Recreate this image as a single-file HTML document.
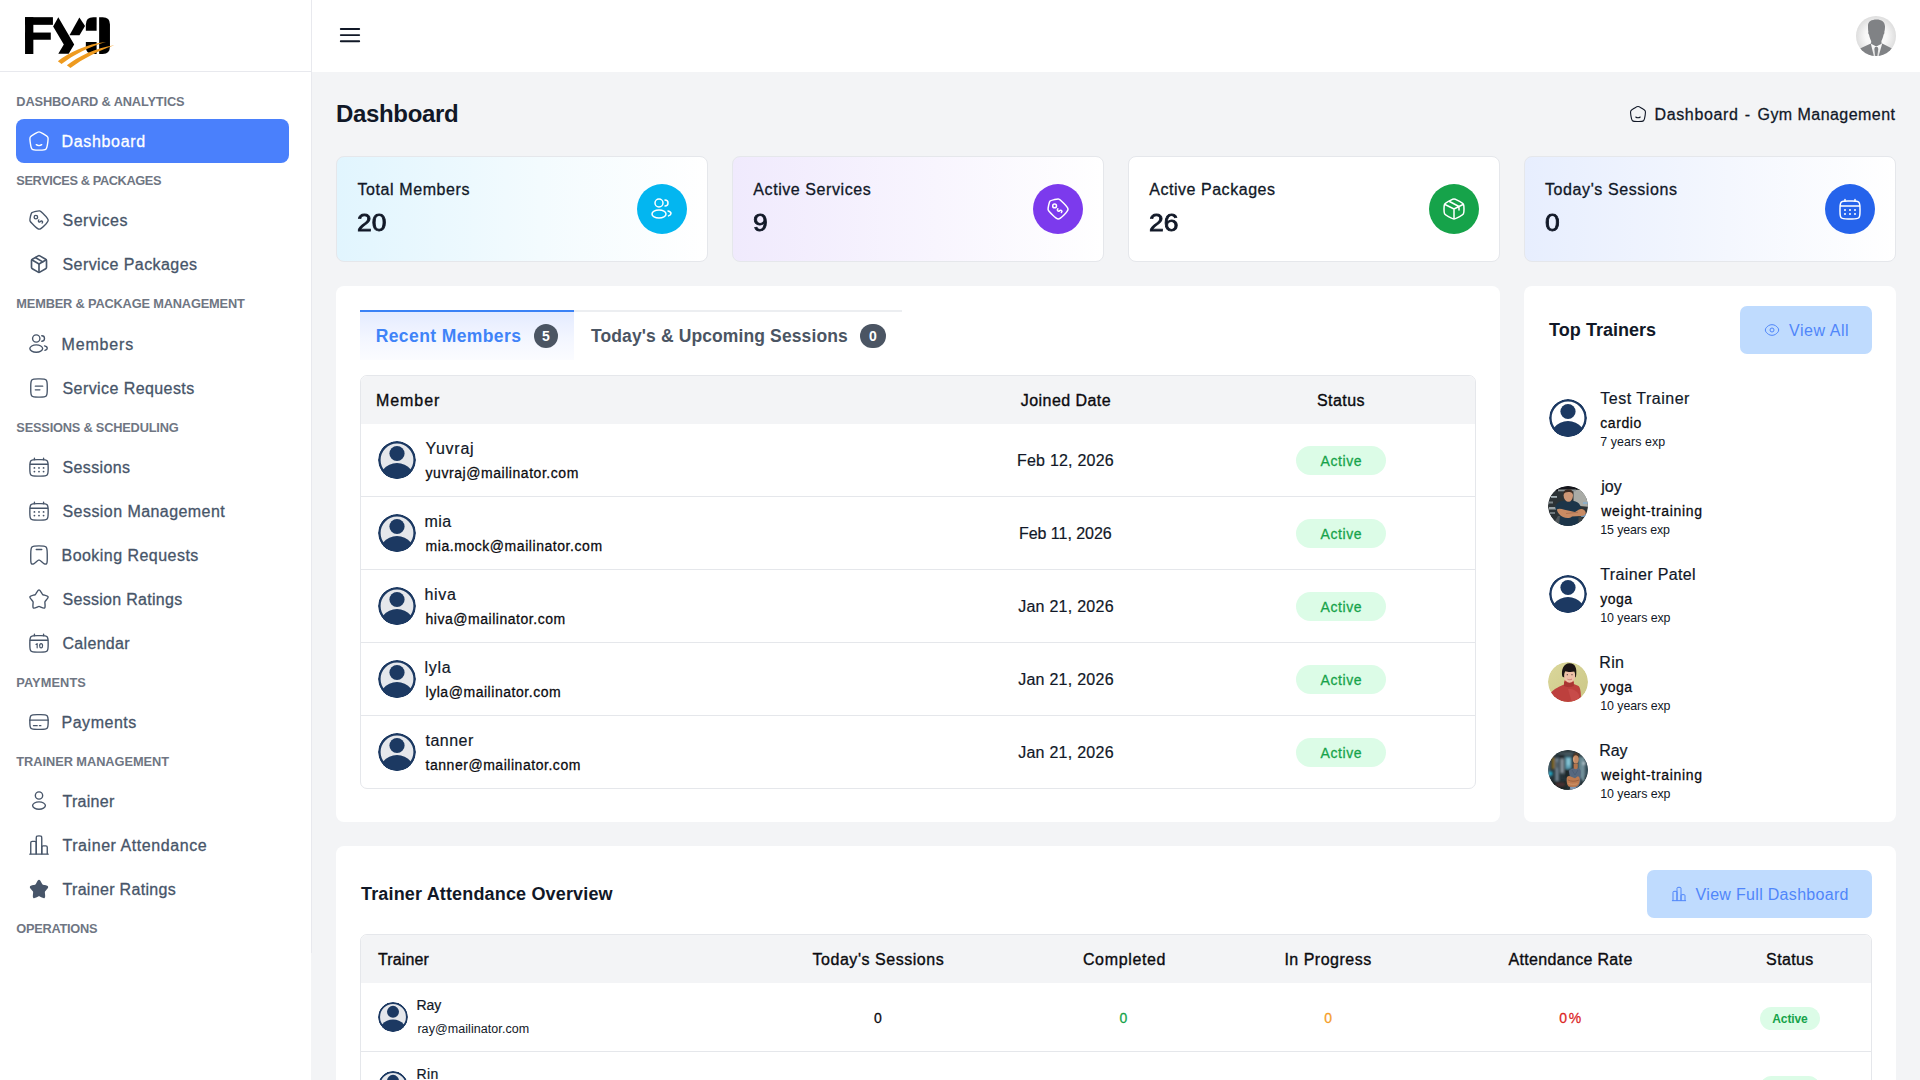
<!DOCTYPE html>
<html lang="en">
<head>
<meta charset="utf-8">
<title>Dashboard - Gym Management</title>
<style>
*{box-sizing:border-box;margin:0;padding:0}
html,body{width:1920px;height:1080px;overflow:hidden}
body{font-family:"Liberation Sans",sans-serif;background:#f3f4f6;color:#111827;position:relative;font-size:16px}
svg{display:block}
.abs{position:absolute}
.t{position:absolute;white-space:nowrap;display:block}
.md{-webkit-text-stroke:0.27px currentColor}
.sb{font-weight:bold}

/* ---------- sidebar ---------- */
#sidebar{position:absolute;left:0;top:0;width:311px;height:1080px;background:#fff}
#sideline{position:absolute;left:311px;top:0;width:1px;height:953px;background:#e8e9ee}
#logo{position:absolute;left:10px;top:5px;width:120px;height:70px}
#sidehead-line{position:absolute;left:0;top:71px;width:311px;height:1px;background:#e8e9ee}
.lbl{position:absolute;left:16px;height:35px;line-height:35px;font-size:12.800px;font-weight:bold;color:#6f7683;white-space:nowrap}
.nav{position:absolute;left:16px;width:273px;height:44px;border-radius:8px;color:#475569}
.nav .tx{position:absolute;left:46px;top:1px;line-height:44px;font-size:16px;white-space:nowrap;-webkit-text-stroke:0.3px currentColor}
.nav svg{position:absolute;left:12px;top:11px;width:22px;height:22px;fill:none;stroke:currentColor;stroke-width:1.5}
.nav.active{background:#4a80fc;color:#fff}

/* ---------- header ---------- */
#header{position:absolute;left:312px;top:0;width:1608px;height:72px;background:#fff}
#burger{position:absolute;left:339px;top:26px;width:22px;height:18px}
#useravatar{position:absolute;left:1856px;top:16px;width:40px;height:40px}

/* ---------- main ---------- */
.panel{position:absolute;background:#fff;border-radius:8px}
.card{position:absolute;top:156px;width:372px;height:106px;border:1px solid #e5e7eb;border-radius:8px;background:#fff}
.card .lab{position:absolute;left:20px;top:21px;line-height:24px;font-size:16px;white-space:nowrap;-webkit-text-stroke:0.3px currentColor}
.card .val{position:absolute;left:19.500px;top:50px;line-height:32px;font-size:23.600px;white-space:nowrap;-webkit-text-stroke:0.8px currentColor;transform:scaleX(1.12);transform-origin:0 50%}
.card .ic{position:absolute;left:300px;top:27px;width:50px;height:50px;border-radius:50%}
.card .ic svg{position:absolute;left:13px;top:13px;width:24px;height:24px;fill:none;stroke:#fff;stroke-width:1.5}

.tbl{position:absolute;border:1px solid #e5e7eb;border-radius:7px;background:#fff;overflow:hidden}
.thead{position:absolute;left:0;top:0;right:0;background:#f3f4f6}
.th{position:absolute;top:1px;font-size:16px;color:#0b0b0f;white-space:nowrap;-webkit-text-stroke:0.35px currentColor}
.row{position:absolute;left:0;right:0;border-top:1px solid #e5e7eb}
.pill{position:absolute;border-radius:999px;background:#dcfce7;color:#16a34a;text-align:center;white-space:nowrap}
.btn{position:absolute;background:#bfdbfe;border-radius:7px;color:#5086fa}
.av{position:absolute;border-radius:50%;clip-path:circle(50%)}
/*FIT*/
#l1{letter-spacing:-0.144px;left:16.30px!important}
#l2{letter-spacing:-0.399px;left:16.30px!important}
#l3{letter-spacing:-0.171px;left:16.30px!important}
#l4{letter-spacing:-0.202px;left:16.30px!important}
#l5{letter-spacing:0.079px;left:16.30px!important}
#l6{letter-spacing:-0.050px;left:16.30px!important}
#l7{letter-spacing:-0.270px;left:16.30px!important}
#n1{letter-spacing:0.665px;left:45.50px!important}
#n2{letter-spacing:0.521px;left:46.50px!important}
#n3{letter-spacing:0.428px;left:46.50px!important}
#n4{letter-spacing:0.853px;left:45.50px!important}
#n5{letter-spacing:0.420px;left:46.50px!important}
#n6{letter-spacing:0.367px;left:46.50px!important}
#n7{letter-spacing:0.440px;left:46.50px!important}
#n8{letter-spacing:0.462px;left:45.50px!important}
#n9{letter-spacing:0.291px;left:46.50px!important}
#n10{letter-spacing:0.312px;left:46.50px!important}
#n11{letter-spacing:0.522px;left:45.50px!important}
#n12{letter-spacing:0.290px;left:46.50px!important}
#n13{letter-spacing:0.558px;left:46.50px!important}
#n14{letter-spacing:0.322px;left:46.50px!important}
#ptitle{letter-spacing:-0.338px;left:336.00px!important}
#bc1{letter-spacing:0.665px;left:1654.41px!important}
#bc2{letter-spacing:0.000px;left:1744.71px!important}
#bc3{letter-spacing:0.448px;left:1757.50px!important}
#c1l{letter-spacing:0.590px;left:20.50px!important}
#c2l{letter-spacing:0.580px;left:20.30px!important}
#c3l{letter-spacing:0.537px;left:20.21px!important}
#c4l{letter-spacing:0.592px;left:20.00px!important}
#tb1{letter-spacing:0.398px;left:375.71px!important}
#tb2{letter-spacing:0.115px;left:591.00px!important}
#mh1{letter-spacing:0.927px;left:15.00px!important}
#mh2{letter-spacing:0.450px;left:704.93px!important}
#mh3{letter-spacing:0.427px;left:979.97px!important}
#mn0{letter-spacing:0.716px;left:64.50px!important}
#mn1{letter-spacing:0.457px;left:63.50px!important}
#mn2{letter-spacing:0.648px;left:63.50px!important}
#mn3{letter-spacing:0.727px;left:63.50px!important}
#mn4{letter-spacing:0.490px;left:64.50px!important}
#me0{letter-spacing:0.552px;left:64.50px!important}
#me1{letter-spacing:0.554px;left:64.50px!important}
#me2{letter-spacing:0.528px;left:64.50px!important}
#me3{letter-spacing:0.543px;left:64.50px!important}
#me4{letter-spacing:0.535px;left:64.50px!important}
#md0{letter-spacing:0.213px;left:704.46px!important}
#md1{letter-spacing:-0.042px;left:704.33px!important}
#md2{letter-spacing:0.261px;left:704.99px!important}
#md3{letter-spacing:0.261px;left:704.99px!important}
#md4{letter-spacing:0.261px;left:704.99px!important}
#mp0{letter-spacing:0.579px;margin-right:-0.579px}
#mp1{letter-spacing:0.579px;margin-right:-0.579px}
#mp2{letter-spacing:0.579px;margin-right:-0.579px}
#mp3{letter-spacing:0.579px;margin-right:-0.579px}
#mp4{letter-spacing:0.579px;margin-right:-0.579px}
#tt{letter-spacing:0.029px;left:1549.11px!important}
#va{letter-spacing:0.545px;left:49.00px!important}
#tn0{letter-spacing:0.504px;left:1600.30px!important}
#tn1{letter-spacing:0.016px;left:1601.30px!important}
#tn2{letter-spacing:0.354px;left:1600.30px!important}
#tn3{letter-spacing:0.342px;left:1599.30px!important}
#tn4{letter-spacing:-0.128px;left:1599.30px!important}
#ts0{letter-spacing:0.570px;left:1600.30px!important}
#ts1{letter-spacing:0.695px;left:1601.30px!important}
#ts2{letter-spacing:0.474px;left:1600.30px!important}
#ts3{letter-spacing:0.474px;left:1600.30px!important}
#ts4{letter-spacing:0.695px;left:1601.30px!important}
#tx0{letter-spacing:0.084px;left:1600.30px!important}
#tx1{letter-spacing:-0.115px;left:1600.30px!important}
#tx2{letter-spacing:-0.069px;left:1600.30px!important}
#tx3{letter-spacing:-0.069px;left:1600.30px!important}
#tx4{letter-spacing:-0.069px;left:1600.30px!important}
#ta{letter-spacing:0.160px;left:361.00px!important}
#vfd{letter-spacing:0.308px;left:48.61px!important}
#ah1{letter-spacing:0.123px;left:17.00px!important}
#ah2{letter-spacing:0.542px;left:517.38px!important}
#ah3{letter-spacing:0.651px;left:763.54px!important}
#ah4{letter-spacing:0.498px;left:967.05px!important}
#ah5{letter-spacing:0.335px;left:1209.53px!important}
#ah6{letter-spacing:0.367px;left:1428.89px!important}
#an0{letter-spacing:-0.050px;left:55.40px!important}
#ae0{letter-spacing:0.068px;left:56.40px!important}
#an1{letter-spacing:0.385px;left:55.40px!important}
#ae1{letter-spacing:0.043px;left:56.40px!important}
#ap0{letter-spacing:1.605px;left:1210.04px!important}
#ap1{letter-spacing:1.605px;left:1210.04px!important}
#ab0{letter-spacing:-0.151px;margin-right:0.151px}
#ab1{letter-spacing:-0.151px;margin-right:0.151px}
/*ENDFIT*/
</style>
</head>
<body>

<!-- ================= SIDEBAR ================= -->
<aside id="sidebar">
  <svg id="logo" viewBox="0 0 1851 1080">
    <g fill="#000">
      <rect x="232" y="188" width="430" height="118"/>
      <rect x="232" y="188" width="128" height="568"/>
      <rect x="232" y="425" width="397" height="111"/>
      <polygon points="745,188 990,610 905,752 745,752 830,610 665,330"/>
      <polygon points="1070,192 1158,325 1072,466 918,466"/>
      <path d="M1336 188 L1336 396 L1170 396 L1170 300 Q1170 188 1285 188 Z"/>
      <path d="M1170 570 L1336 570 L1336 756 L1285 756 Q1170 756 1170 650 Z"/>
      <path d="M1375 188 L1430 188 Q1542 188 1542 300 L1542 640 Q1542 756 1430 756 L1375 756 Z"/>
    </g>
    <g fill="#ee9a1f">
      <path d="M738 868 C900 740 1180 600 1482 572 C1230 640 980 770 795 912 Z"/>
      <path d="M877 930 C1040 800 1320 660 1612 620 C1370 700 1120 830 932 972 Z"/>
    </g>
  </svg>
  <div id="sidehead-line"></div>

  <div class="lbl" id="l1" style="top:84px">DASHBOARD &amp; ANALYTICS</div>
  <a class="nav active" style="top:119px">
    <svg viewBox="0 0 24 24"><path d="M2.364 12.958c-.38-2.637-.57-3.956-.029-5.083s1.691-1.813 3.992-3.183l1.385-.825C9.800 2.622 10.846 2 12 2s2.199.622 4.288 1.867l1.385.825c2.300 1.370 3.451 2.056 3.992 3.183s.35 2.446-.03 5.083l-.278 1.937c-.487 3.388-.731 5.081-1.906 6.093S16.553 22 13.106 22h-2.212c-3.447 0-5.170 0-6.345-1.012s-1.419-2.705-1.906-6.093z"/><path stroke-linecap="round" d="M9 16c.85.63 1.885 1 3 1s2.15-.37 3-1"/></svg>
    <span class="tx" id="n1">Dashboard</span>
  </a>

  <div class="lbl" id="l2" style="top:163px">SERVICES &amp; PACKAGES</div>
  <a class="nav" style="top:198px">
    <svg viewBox="0 0 24 24"><path d="M4.728 16.137c-1.545-1.546-2.318-2.318-2.605-3.321-.288-1.003-.042-2.068.45-4.197l.283-1.228c.413-1.792.62-2.688 1.233-3.302s1.510-.82 3.302-1.233l1.228-.284c2.130-.491 3.194-.737 4.197-.45 1.003.288 1.775 1.061 3.320 2.606l1.830 1.830C20.657 9.248 22 10.592 22 12.262c0 1.671-1.344 3.015-4.033 5.704-2.690 2.690-4.034 4.034-5.705 4.034-1.670 0-3.015-1.344-5.704-4.033z"/><circle cx="8.6" cy="8.9" r="1.9"/><path stroke-linecap="round" d="M15.4 15.4c.58-.59.66-1.46.17-1.950-.49-.49-1.360-.41-1.940.18-.59.58-1.460.66-1.950.17-.49-.49-.41-1.360.18-1.940"/></svg>
    <span class="tx" id="n2">Services</span>
  </a>
  <a class="nav" style="top:242px">
    <svg viewBox="0 0 24 24" style="left:13px;top:12px;width:20px;height:20px;stroke-width:2;stroke-linecap:round;stroke-linejoin:round"><path d="m7.500 4.270 9 5.150"/><path d="M21 8a2 2 0 0 0-1-1.730l-7-4a2 2 0 0 0-2 0l-7 4A2 2 0 0 0 3 8v8a2 2 0 0 0 1 1.730l7 4a2 2 0 0 0 2 0l7-4A2 2 0 0 0 21 16Z"/><path d="m3.300 7 8.700 5 8.700-5"/><path d="M12 22V12"/></svg>
    <span class="tx" id="n3">Service Packages</span>
  </a>

  <div class="lbl" id="l3" style="top:286px">MEMBER &amp; PACKAGE MANAGEMENT</div>
  <a class="nav" style="top:322px">
    <svg viewBox="0 0 24 24"><circle cx="9" cy="6" r="4"/><path stroke-linecap="round" d="M15 9a3 3 0 1 0 0-6"/><ellipse cx="9" cy="17" rx="7" ry="4"/><path stroke-linecap="round" d="M18 14c1.754.385 3 1.359 3 2.500 0 1.030-1.014 1.923-2.500 2.370"/></svg>
    <span class="tx" id="n4">Members</span>
  </a>
  <a class="nav" style="top:366px">
    <svg viewBox="0 0 24 24"><path d="M3 10c0-3.771 0-5.657 1.172-6.828S7.229 2 11 2h2c3.771 0 5.657 0 6.828 1.172S21 6.229 21 10v4c0 3.771 0 5.657-1.172 6.828S16.771 22 13 22h-2c-3.771 0-5.657 0-6.828-1.172S3 17.771 3 14z"/><path stroke-linecap="round" d="M8 10h8M8 14h5"/></svg>
    <span class="tx" id="n5">Service Requests</span>
  </a>

  <div class="lbl" id="l4" style="top:410px">SESSIONS &amp; SCHEDULING</div>
  <a class="nav" style="top:445px">
    <svg viewBox="0 0 24 24"><path d="M2 12c0-3.771 0-5.657 1.172-6.828S6.229 4 10 4h4c3.771 0 5.657 0 6.828 1.172S22 8.229 22 12v2c0 3.771 0 5.657-1.172 6.828S17.771 22 14 22h-4c-3.771 0-5.657 0-6.828-1.172S2 17.771 2 14z"/><path stroke-linecap="round" d="M7 4V2.500M17 4V2.500M2.500 9h19"/><path fill="currentColor" stroke="none" d="M18 17a1 1 0 1 1-2 0 1 1 0 0 1 2 0m0-4a1 1 0 1 1-2 0 1 1 0 0 1 2 0m-5 4a1 1 0 1 1-2 0 1 1 0 0 1 2 0m0-4a1 1 0 1 1-2 0 1 1 0 0 1 2 0m-5 4a1 1 0 1 1-2 0 1 1 0 0 1 2 0m0-4a1 1 0 1 1-2 0 1 1 0 0 1 2 0"/></svg>
    <span class="tx" id="n6">Sessions</span>
  </a>
  <a class="nav" style="top:489px">
    <svg viewBox="0 0 24 24"><path d="M2 12c0-3.771 0-5.657 1.172-6.828S6.229 4 10 4h4c3.771 0 5.657 0 6.828 1.172S22 8.229 22 12v2c0 3.771 0 5.657-1.172 6.828S17.771 22 14 22h-4c-3.771 0-5.657 0-6.828-1.172S2 17.771 2 14z"/><path stroke-linecap="round" d="M7 4V2.500M17 4V2.500M2.500 9h19"/><path fill="currentColor" stroke="none" d="M18 17a1 1 0 1 1-2 0 1 1 0 0 1 2 0m0-4a1 1 0 1 1-2 0 1 1 0 0 1 2 0m-5 4a1 1 0 1 1-2 0 1 1 0 0 1 2 0m0-4a1 1 0 1 1-2 0 1 1 0 0 1 2 0m-5 4a1 1 0 1 1-2 0 1 1 0 0 1 2 0m0-4a1 1 0 1 1-2 0 1 1 0 0 1 2 0"/></svg>
    <span class="tx" id="n7">Session Management</span>
  </a>
  <a class="nav" style="top:533px">
    <svg viewBox="0 0 24 24"><path d="M21 16.090v-4.992c0-4.290 0-6.433-1.318-7.766C18.364 2 16.242 2 12 2S5.636 2 4.318 3.332 3 6.810 3 11.098v4.993c0 3.096 0 4.645.734 5.321.350.323.792.526 1.263.580.987.113 2.140-.907 4.445-2.946 1.020-.901 1.529-1.352 2.118-1.470.290-.060.590-.060.880 0 .590.118 1.099.569 2.118 1.470 2.305 2.039 3.458 3.059 4.445 2.945.470-.053.913-.256 1.263-.579.734-.676.734-2.224.734-5.321Z"/><path stroke-linecap="round" d="M15 6H9"/></svg>
    <span class="tx" id="n8">Booking Requests</span>
  </a>
  <a class="nav" style="top:577px">
    <svg viewBox="0 0 24 24"><path d="M9.153 5.408C10.420 3.136 11.053 2 12 2s1.580 1.136 2.847 3.408l.328.588c.36.646.54.969.82 1.182s.63.292 1.330.450l.636.144c2.460.557 3.689.835 3.982 1.776.292.940-.546 1.921-2.223 3.882l-.434.507c-.476.557-.715.836-.822 1.180-.107.345-.071.717.001 1.460l.066.677c.253 2.617.380 3.925-.386 4.506s-1.918.051-4.220-1.009l-.597-.274c-.654-.302-.981-.452-1.328-.452s-.674.150-1.328.452l-.596.274c-2.303 1.060-3.455 1.590-4.220 1.010-.767-.582-.640-1.890-.387-4.507l.066-.676c.072-.744.108-1.116 0-1.460-.106-.345-.345-.624-.821-1.180l-.434-.508c-1.677-1.960-2.515-2.941-2.223-3.882S3.580 8.328 6.040 7.772l.636-.144c.699-.158 1.048-.237 1.329-.450s.460-.536.820-1.182z"/></svg>
    <span class="tx" id="n9">Session Ratings</span>
  </a>
  <a class="nav" style="top:621px">
    <svg viewBox="0 0 24 24"><path d="M2 12c0-3.771 0-5.657 1.172-6.828S6.229 4 10 4h4c3.771 0 5.657 0 6.828 1.172S22 8.229 22 12v2c0 3.771 0 5.657-1.172 6.828S17.771 22 14 22h-4c-3.771 0-5.657 0-6.828-1.172S2 17.771 2 14z"/><path stroke-linecap="round" d="M7 4V2.500M17 4V2.500M2.500 9h19"/><path stroke-width="1.3" stroke-linecap="round" stroke-linejoin="round" d="M8.700 13.600l1.300-.9v4.600"/><ellipse cx="14.300" cy="15" rx="1.600" ry="2.300" stroke-width="1.300"/></svg>
    <span class="tx" id="n10">Calendar</span>
  </a>

  <div class="lbl" id="l5" style="top:665px">PAYMENTS</div>
  <a class="nav" style="top:700px">
    <svg viewBox="0 0 24 24"><path d="M2 12c0-3.771 0-5.657 1.172-6.828S6.229 4 10 4h4c3.771 0 5.657 0 6.828 1.172S22 8.229 22 12s0 5.657-1.172 6.828S17.771 20 14 20h-4c-3.771 0-5.657 0-6.828-1.172S2 15.771 2 12Z"/><path stroke-linecap="round" d="M10 16H6m8 0h-1.500M2 10h20"/></svg>
    <span class="tx" id="n11">Payments</span>
  </a>

  <div class="lbl" id="l6" style="top:744px">TRAINER MANAGEMENT</div>
  <a class="nav" style="top:779px">
    <svg viewBox="0 0 24 24"><circle cx="12" cy="6" r="4"/><ellipse cx="12" cy="17" rx="7" ry="4"/></svg>
    <span class="tx" id="n12">Trainer</span>
  </a>
  <a class="nav" style="top:823px">
    <svg viewBox="0 0 24 24"><path stroke-linecap="round" d="M22 22H2"/><path d="M21 22v-7.500a1.500 1.500 0 0 0-1.500-1.500h-3a1.500 1.500 0 0 0-1.500 1.500V22"/><path d="M15 22V5c0-1.414 0-2.121-.44-2.560C14.122 2 13.415 2 12 2s-2.121 0-2.560.44C9 2.878 9 3.585 9 5v17"/><path d="M9 22V9.500A1.500 1.500 0 0 0 7.500 8h-3A1.500 1.500 0 0 0 3 9.500V22"/></svg>
    <span class="tx" id="n13">Trainer Attendance</span>
  </a>
  <a class="nav" style="top:867px">
    <svg viewBox="0 0 24 24"><path fill="currentColor" stroke="none" d="M9.153 5.408C10.420 3.136 11.053 2 12 2s1.580 1.136 2.847 3.408l.328.588c.36.646.54.969.82 1.182s.63.292 1.330.450l.636.144c2.460.557 3.689.835 3.982 1.776.292.940-.546 1.921-2.223 3.882l-.434.507c-.476.557-.715.836-.822 1.180-.107.345-.071.717.001 1.460l.066.677c.253 2.617.380 3.925-.386 4.506s-1.918.051-4.220-1.009l-.597-.274c-.654-.302-.981-.452-1.328-.452s-.674.150-1.328.452l-.596.274c-2.303 1.060-3.455 1.590-4.220 1.010-.767-.582-.640-1.890-.387-4.507l.066-.676c.072-.744.108-1.116 0-1.460-.106-.345-.345-.624-.821-1.180l-.434-.508c-1.677-1.960-2.515-2.941-2.223-3.882S3.580 8.328 6.040 7.772l.636-.144c.699-.158 1.048-.237 1.329-.450s.460-.536.820-1.182z"/></svg>
    <span class="tx" id="n14">Trainer Ratings</span>
  </a>

  <div class="lbl" id="l7" style="top:911px">OPERATIONS</div>
</aside>
<div id="sideline"></div>

<!-- ================= HEADER ================= -->
<header id="header"></header>
<svg id="burger" viewBox="0 0 22 18"><path d="M1.800 3h18.400M1.800 9.100h18.400M1.800 15.200h18.400" stroke="#111827" stroke-width="1.900" stroke-linecap="round" fill="none"/></svg>
<svg id="useravatar" viewBox="0 0 40 40">
  <defs>
    <radialGradient id="uag" cx="50%" cy="50%" r="50%"><stop offset="0" stop-color="#ffffff"/><stop offset="0.55" stop-color="#f7f7f7"/><stop offset="1" stop-color="#dedede"/></radialGradient>
    <clipPath id="uac"><circle cx="20" cy="20" r="20"/></clipPath>
  </defs>
  <circle cx="20" cy="20" r="20" fill="url(#uag)"/>
  <g clip-path="url(#uac)">
    <path d="M4 32.500 L14.800 27.600 L17.800 40 L22.700 40 L26.200 27.600 L36 32.500 L40 40 L0 40 Z" fill="#808285"/>
    <path d="M12 9.500 C12 5.500 15.500 3.500 20.500 3.500 C25.500 3.500 29 6 29 10.500 C29 12.500 28.800 14.500 28.300 16 C28.600 16.500 28.300 18 27.600 18.500 C27 21.500 26 24 25.400 25 L25.600 27.800 L20.300 30.600 L15 27.800 L15.200 25 C14.400 23.500 13.500 21.500 13 18.500 C12.300 18 12 16.500 12.400 16 C12 14 12 11.500 12 9.500 Z" fill="#808285"/>
    <path d="M19 31 L21.600 31 L22.300 33 L21.300 40 L19.200 40 L18.300 33 Z" fill="#808285"/>
  </g>
</svg>

<!-- ================= PAGE TITLE ================= -->
<h1 class="t sb" id="ptitle" style="left:336px;top:96px;line-height:36px;font-size:24px">Dashboard</h1>
<svg class="abs" style="left:1629px;top:105px;width:18px;height:18px;fill:none;stroke:#111827;stroke-width:1.500" viewBox="0 0 24 24"><path d="M2.364 12.958c-.38-2.637-.57-3.956-.029-5.083s1.691-1.813 3.992-3.183l1.385-.825C9.800 2.622 10.846 2 12 2s2.199.622 4.288 1.867l1.385.825c2.300 1.370 3.451 2.056 3.992 3.183s.35 2.446-.03 5.083l-.278 1.937c-.487 3.388-.731 5.081-1.906 6.093S16.553 22 13.106 22h-2.212c-3.447 0-5.170 0-6.345-1.012s-1.419-2.705-1.906-6.093z"/><path stroke-linecap="round" d="M9 16c.85.63 1.885 1 3 1s2.150-.37 3-1"/></svg>
<span class="t md" id="bc1" style="left:1655px;top:103px;line-height:24px">Dashboard</span>
<span class="t md" id="bc2" style="left:1744px;top:103px;line-height:24px">-</span>
<span class="t md" id="bc3" style="left:1757px;top:103px;line-height:24px">Gym Management</span>

<!-- ================= STAT CARDS ================= -->
<section class="card" style="left:336px;background:linear-gradient(90deg,#e1f5fe 0%,#f3fbfe 55%,#ffffff 100%)">
  <span class="lab" id="c1l">Total Members</span><span class="val" id="c1v">20</span>
  <div class="ic" style="background:#03b6f0"><svg viewBox="0 0 24 24"><circle cx="9" cy="6" r="4"/><path stroke-linecap="round" d="M15 9a3 3 0 1 0 0-6"/><ellipse cx="9" cy="17" rx="7" ry="4"/><path stroke-linecap="round" d="M18 14c1.754.385 3 1.359 3 2.500 0 1.030-1.014 1.923-2.500 2.370"/></svg></div>
</section>
<section class="card" style="left:732px;background:linear-gradient(90deg,#f0eafd 0%,#f8f5fe 55%,#ffffff 100%)">
  <span class="lab" id="c2l">Active Services</span><span class="val" id="c2v">9</span>
  <div class="ic" style="background:#7c3aed"><svg viewBox="0 0 24 24"><path d="M4.728 16.137c-1.545-1.546-2.318-2.318-2.605-3.321-.288-1.003-.042-2.068.45-4.197l.283-1.228c.413-1.792.62-2.688 1.233-3.302s1.510-.82 3.302-1.233l1.228-.284c2.130-.491 3.194-.737 4.197-.45 1.003.288 1.775 1.061 3.320 2.606l1.830 1.830C20.657 9.248 22 10.592 22 12.262c0 1.671-1.344 3.015-4.033 5.704-2.690 2.690-4.034 4.034-5.705 4.034-1.670 0-3.015-1.344-5.704-4.033z"/><circle cx="8.600" cy="8.900" r="1.900"/><path stroke-linecap="round" d="M15.400 15.400c.58-.59.66-1.460.17-1.950-.49-.49-1.360-.41-1.940.18-.59.58-1.460.66-1.950.17-.49-.49-.41-1.360.18-1.940"/></svg></div>
</section>
<section class="card" style="left:1128px">
  <span class="lab" id="c3l">Active Packages</span><span class="val" id="c3v">26</span>
  <div class="ic" style="background:#16a34a"><svg viewBox="0 0 24 24"><path stroke-linecap="round" d="M15.578 3.382l2 1.050c2.151 1.129 3.227 1.693 3.825 2.708C22 8.154 22 9.417 22 11.942v.117c0 2.524 0 3.787-.597 4.801-.598 1.015-1.674 1.580-3.825 2.709l-2 1.049C13.822 21.539 12.944 22 12 22s-1.822-.46-3.578-1.382l-2-1.050c-2.151-1.129-3.227-1.693-3.825-2.708C2 15.846 2 14.583 2 12.060v-.117c0-2.525 0-3.788.597-4.802.598-1.015 1.674-1.580 3.825-2.708l2-1.050C10.178 2.461 11.056 2 12 2s1.822.46 3.578 1.382Z"/><path stroke-linecap="round" d="M21 7.500l-4 2M12 12L3 7.500m9 4.500v9.500m0-9.500l4.500-2.250.5-.250m0 0V13m0-3.500l-9.500-5"/></svg></div>
</section>
<section class="card" style="left:1524px;background:linear-gradient(90deg,#e7eefe 0%,#f4f7fe 55%,#ffffff 100%)">
  <span class="lab" id="c4l">Today's Sessions</span><span class="val" id="c4v">0</span>
  <div class="ic" style="background:#2563eb"><svg viewBox="0 0 24 24"><path d="M2 12c0-3.771 0-5.657 1.172-6.828S6.229 4 10 4h4c3.771 0 5.657 0 6.828 1.172S22 8.229 22 12v2c0 3.771 0 5.657-1.172 6.828S17.771 22 14 22h-4c-3.771 0-5.657 0-6.828-1.172S2 17.771 2 14z"/><path stroke-linecap="round" d="M7 4V2.500M17 4V2.500M2.500 9h19"/><path fill="#fff" stroke="none" d="M18 17a1 1 0 1 1-2 0 1 1 0 0 1 2 0m0-4a1 1 0 1 1-2 0 1 1 0 0 1 2 0m-5 4a1 1 0 1 1-2 0 1 1 0 0 1 2 0m0-4a1 1 0 1 1-2 0 1 1 0 0 1 2 0m-5 4a1 1 0 1 1-2 0 1 1 0 0 1 2 0m0-4a1 1 0 1 1-2 0 1 1 0 0 1 2 0"/></svg></div>
</section>
<!-- ================= RECENT MEMBERS PANEL ================= -->
<section class="panel" style="left:336px;top:286px;width:1164px;height:536px"></section>
<div class="abs" style="left:360px;top:310px;width:542px;height:2px;background:#eceef1"></div>
<div class="abs" id="tab1" style="left:360px;top:310px;width:214px;height:50px;border-top:2px solid #3b82f6;background:linear-gradient(180deg,#e4ebff 0%,#f3f6ff 55%,#fbfcff 100%)"></div>
<span class="t sb" id="tb1" style="left:376.500px;top:322px;line-height:28px;font-size:17.500px;color:#3f83f8">Recent Members</span>
<span class="abs" style="left:534px;top:324px;width:24px;height:24px;border-radius:12px;background:#4b5563;color:#fff;font-size:14px;font-weight:bold;line-height:25px;text-align:center">5</span>
<span class="t sb" id="tb2" style="left:591px;top:322px;line-height:28px;font-size:17.500px;color:#4b5563">Today's &amp; Upcoming Sessions</span>
<span class="abs" style="left:860px;top:324px;width:26px;height:24px;border-radius:12px;background:#4b5563;color:#fff;font-size:14px;font-weight:bold;line-height:25px;text-align:center">0</span>

<div class="tbl" style="left:360px;top:375px;width:1116px;height:414px">
  <div class="thead" style="height:48px">
    <span class="th" id="mh1" style="left:16px;line-height:48px">Member</span>
    <span class="th" id="mh2" style="left:704.750px;line-height:48px;transform:translateX(-50%)">Joined Date</span>
    <span class="th" id="mh3" style="left:979.750px;line-height:48px;transform:translateX(-50%)">Status</span>
  </div>
  <div class="abs" style="left:0;right:0;top:48px;height:73px;border-bottom:1px solid #e5e7eb;">
    <svg class="av" style="left:17px;top:17px;width:38px;height:38px" viewBox="0 0 38 38"><circle cx="19" cy="19" r="18.500" fill="#e5e7eb"/><circle cx="19" cy="19" r="17.700" fill="none" stroke="#1c3962" stroke-width="2.600"/><circle cx="19" cy="12.500" r="7.600" fill="#1c3962"/><path d="M5.100 28.400A18.450 18.450 0 0 1 32.900 28.400L32.900 38L5.100 38Z" fill="#1c3962"/></svg>
    <span class="t" id="mn0" style="left:64.500px;top:13px;line-height:24px;font-size:16px;-webkit-text-stroke:0.2px currentColor">Yuvraj</span>
    <span class="t md" id="me0" style="left:64.500px;top:39px;line-height:20px;font-size:14px;color:#0b0b0f">yuvraj@mailinator.com</span>
    <span class="t" id="md0" style="left:704.750px;top:25px;line-height:24px;font-size:16px;transform:translateX(-50%);-webkit-text-stroke:0.2px currentColor">Feb 12, 2026</span>
    <span class="pill md" style="left:935px;top:22px;width:90px;height:29px;line-height:31px;font-size:14px"><span id="mp0">Active</span></span>
  </div>
  <div class="abs" style="left:0;right:0;top:121px;height:73px;border-bottom:1px solid #e5e7eb;">
    <svg class="av" style="left:17px;top:17px;width:38px;height:38px" viewBox="0 0 38 38"><circle cx="19" cy="19" r="18.500" fill="#e5e7eb"/><circle cx="19" cy="19" r="17.700" fill="none" stroke="#1c3962" stroke-width="2.600"/><circle cx="19" cy="12.500" r="7.600" fill="#1c3962"/><path d="M5.100 28.400A18.450 18.450 0 0 1 32.900 28.400L32.900 38L5.100 38Z" fill="#1c3962"/></svg>
    <span class="t" id="mn1" style="left:64.500px;top:13px;line-height:24px;font-size:16px;-webkit-text-stroke:0.2px currentColor">mia</span>
    <span class="t md" id="me1" style="left:64.500px;top:39px;line-height:20px;font-size:14px;color:#0b0b0f">mia.mock@mailinator.com</span>
    <span class="t" id="md1" style="left:704.750px;top:25px;line-height:24px;font-size:16px;transform:translateX(-50%);-webkit-text-stroke:0.2px currentColor">Feb 11, 2026</span>
    <span class="pill md" style="left:935px;top:22px;width:90px;height:29px;line-height:31px;font-size:14px"><span id="mp1">Active</span></span>
  </div>
  <div class="abs" style="left:0;right:0;top:194px;height:73px;border-bottom:1px solid #e5e7eb;">
    <svg class="av" style="left:17px;top:17px;width:38px;height:38px" viewBox="0 0 38 38"><circle cx="19" cy="19" r="18.500" fill="#e5e7eb"/><circle cx="19" cy="19" r="17.700" fill="none" stroke="#1c3962" stroke-width="2.600"/><circle cx="19" cy="12.500" r="7.600" fill="#1c3962"/><path d="M5.100 28.400A18.450 18.450 0 0 1 32.900 28.400L32.900 38L5.100 38Z" fill="#1c3962"/></svg>
    <span class="t" id="mn2" style="left:64.500px;top:13px;line-height:24px;font-size:16px;-webkit-text-stroke:0.2px currentColor">hiva</span>
    <span class="t md" id="me2" style="left:64.500px;top:39px;line-height:20px;font-size:14px;color:#0b0b0f">hiva@mailinator.com</span>
    <span class="t" id="md2" style="left:704.750px;top:25px;line-height:24px;font-size:16px;transform:translateX(-50%);-webkit-text-stroke:0.2px currentColor">Jan 21, 2026</span>
    <span class="pill md" style="left:935px;top:22px;width:90px;height:29px;line-height:31px;font-size:14px"><span id="mp2">Active</span></span>
  </div>
  <div class="abs" style="left:0;right:0;top:267px;height:73px;border-bottom:1px solid #e5e7eb;">
    <svg class="av" style="left:17px;top:17px;width:38px;height:38px" viewBox="0 0 38 38"><circle cx="19" cy="19" r="18.500" fill="#e5e7eb"/><circle cx="19" cy="19" r="17.700" fill="none" stroke="#1c3962" stroke-width="2.600"/><circle cx="19" cy="12.500" r="7.600" fill="#1c3962"/><path d="M5.100 28.400A18.450 18.450 0 0 1 32.900 28.400L32.900 38L5.100 38Z" fill="#1c3962"/></svg>
    <span class="t" id="mn3" style="left:64.500px;top:13px;line-height:24px;font-size:16px;-webkit-text-stroke:0.2px currentColor">lyla</span>
    <span class="t md" id="me3" style="left:64.500px;top:39px;line-height:20px;font-size:14px;color:#0b0b0f">lyla@mailinator.com</span>
    <span class="t" id="md3" style="left:704.750px;top:25px;line-height:24px;font-size:16px;transform:translateX(-50%);-webkit-text-stroke:0.2px currentColor">Jan 21, 2026</span>
    <span class="pill md" style="left:935px;top:22px;width:90px;height:29px;line-height:31px;font-size:14px"><span id="mp3">Active</span></span>
  </div>
  <div class="abs" style="left:0;right:0;top:340px;height:73px;">
    <svg class="av" style="left:17px;top:17px;width:38px;height:38px" viewBox="0 0 38 38"><circle cx="19" cy="19" r="18.500" fill="#e5e7eb"/><circle cx="19" cy="19" r="17.700" fill="none" stroke="#1c3962" stroke-width="2.600"/><circle cx="19" cy="12.500" r="7.600" fill="#1c3962"/><path d="M5.100 28.400A18.450 18.450 0 0 1 32.900 28.400L32.900 38L5.100 38Z" fill="#1c3962"/></svg>
    <span class="t" id="mn4" style="left:64.500px;top:13px;line-height:24px;font-size:16px;-webkit-text-stroke:0.2px currentColor">tanner</span>
    <span class="t md" id="me4" style="left:64.500px;top:39px;line-height:20px;font-size:14px;color:#0b0b0f">tanner@mailinator.com</span>
    <span class="t" id="md4" style="left:704.750px;top:25px;line-height:24px;font-size:16px;transform:translateX(-50%);-webkit-text-stroke:0.2px currentColor">Jan 21, 2026</span>
    <span class="pill md" style="left:935px;top:22px;width:90px;height:29px;line-height:31px;font-size:14px"><span id="mp4">Active</span></span>
  </div>
</div>

<!-- ================= TOP TRAINERS PANEL ================= -->
<section class="panel" style="left:1524px;top:286px;width:372px;height:536px"></section>
<h2 class="t sb" id="tt" style="left:1549px;top:316px;line-height:28px;font-size:18px">Top Trainers</h2>
<a class="btn" style="left:1740px;top:306px;width:132px;height:48px">
  <svg class="abs" style="left:24px;top:16px;width:16px;height:16px;fill:none;stroke:currentColor;stroke-width:1.500" viewBox="0 0 24 24"><path d="M3.275 15.296C2.425 14.192 2 13.639 2 12c0-1.640.425-2.191 1.275-3.296C4.972 6.500 7.818 4 12 4s7.028 2.500 8.725 4.704C21.575 9.810 22 10.361 22 12c0 1.640-.425 2.191-1.275 3.296C19.028 17.500 16.182 20 12 20s-7.028-2.500-8.725-4.704Z"/><path d="M15 12a3 3 0 1 1-6 0 3 3 0 0 1 6 0Z"/></svg>
  <span class="t" id="va" style="left:49px;top:12.500px;line-height:24px;font-size:16px">View All</span>
</a>
<svg class="av" style="left:1549px;top:399px;width:38px;height:38px" viewBox="0 0 38 38"><circle cx="19" cy="19" r="18.500" fill="#ffffff"/><circle cx="19" cy="19" r="17.700" fill="none" stroke="#1c3962" stroke-width="2.600"/><circle cx="19" cy="12.500" r="7.600" fill="#1c3962"/><path d="M5.100 28.400A18.450 18.450 0 0 1 32.900 28.400L32.900 38L5.100 38Z" fill="#1c3962"/></svg>
<span class="t" id="tn0" style="left:1600px;top:387px;line-height:24px;font-size:16px;-webkit-text-stroke:0.2px currentColor">Test Trainer</span>
<span class="t md" id="ts0" style="left:1600px;top:413px;line-height:20px;font-size:14px;color:#0b0b0f">cardio</span>
<span class="t" id="tx0" style="left:1600px;top:433.5px;line-height:16px;font-size:12.400px">7 years exp</span>
<svg class="av" style="left:1548px;top:486px;width:40px;height:40px" viewBox="0 0 40 40">
<defs><filter id="bl1" x="-10%" y="-10%" width="120%" height="120%"><feGaussianBlur stdDeviation="0.7"/></filter></defs>
<rect width="40" height="40" fill="#2c3235"/>
<g filter="url(#bl1)">
<rect x="-2" y="-2" width="44" height="7" fill="#15181a"/>
<path d="M25.500 4L42 3L42 21L32 20L25.500 16Z" fill="#a9aba6"/>
<rect x="10" y="3.500" width="18" height="1.800" fill="#8d9598"/>
<rect x="3" y="10" width="6" height="1.800" fill="#a5b0b5"/>
<rect x="0" y="15.500" width="5" height="2" fill="#7b8488"/>
<rect x="1" y="21" width="7" height="2.500" fill="#9aa3a6"/>
<rect x="2" y="26" width="5" height="2" fill="#6f787c"/>
<rect x="33" y="28" width="6" height="3" fill="#6d93b3"/>
<rect x="35" y="16" width="6" height="2" fill="#8fb0c8"/>
<path d="M10 30L14 30L12 40L4 40Z" fill="#50575a"/>
<path d="M28 32L33 30L36 40L29 40Z" fill="#3d4447"/>
<rect x="17.500" y="12.500" width="5.800" height="5" fill="#c48a68"/>
<ellipse cx="20.300" cy="9.600" rx="4.700" ry="5.700" fill="#cd9776"/>
<path d="M15.400 8.500C15.400 4.500 18 3.300 20.500 3.300C23.500 3.300 25.300 5 25.200 8.300C24.500 6.500 22.500 6 20.300 6C18 6 16.200 6.800 15.400 8.500Z" fill="#3b2b22"/>
<path d="M7.200 22C7.500 18 10.500 15.800 14.500 15L17.500 14.500C19 16.300 22 16.300 23.500 14.500L27 15.300C30.500 16.300 32 18.500 33 21.500L30.500 24L30.300 40L11 40L12 29Z" fill="#1b3648"/>
<path d="M8.800 23.500C10 22.500 13 22.500 16.500 23.800L27 26L31 23.500C33.500 22 37.500 23.500 37.800 27C37.500 29 36 30 33 30L24 30.500C22 32.500 18 32.500 15 31C12 29.500 9.500 27 8.800 23.500Z" fill="#c98b64"/>
<path d="M18 27.500L30 26.300" stroke="#a86f4e" stroke-width="0.800" fill="none"/>
</g></svg>
<span class="t" id="tn1" style="left:1600px;top:475px;line-height:24px;font-size:16px;-webkit-text-stroke:0.2px currentColor">joy</span>
<span class="t md" id="ts1" style="left:1600px;top:501px;line-height:20px;font-size:14px;color:#0b0b0f">weight-training</span>
<span class="t" id="tx1" style="left:1600px;top:521.5px;line-height:16px;font-size:12.400px">15 years exp</span>
<svg class="av" style="left:1549px;top:575px;width:38px;height:38px" viewBox="0 0 38 38"><circle cx="19" cy="19" r="18.500" fill="#ffffff"/><circle cx="19" cy="19" r="17.700" fill="none" stroke="#1c3962" stroke-width="2.600"/><circle cx="19" cy="12.500" r="7.600" fill="#1c3962"/><path d="M5.100 28.400A18.450 18.450 0 0 1 32.900 28.400L32.900 38L5.100 38Z" fill="#1c3962"/></svg>
<span class="t" id="tn2" style="left:1600px;top:563px;line-height:24px;font-size:16px;-webkit-text-stroke:0.2px currentColor">Trainer Patel</span>
<span class="t md" id="ts2" style="left:1600px;top:589px;line-height:20px;font-size:14px;color:#0b0b0f">yoga</span>
<span class="t" id="tx2" style="left:1600px;top:609.5px;line-height:16px;font-size:12.400px">10 years exp</span>
<svg class="av" style="left:1548px;top:662px;width:40px;height:40px" viewBox="0 0 40 40">
<defs><filter id="bl2" x="-10%" y="-10%" width="120%" height="120%"><feGaussianBlur stdDeviation="0.600"/></filter>
<linearGradient id="rbg" x1="0" y1="0" x2="1" y2="1"><stop offset="0" stop-color="#dbd79b"/><stop offset="1" stop-color="#cbc786"/></linearGradient></defs>
<rect width="40" height="40" fill="url(#rbg)"/>
<g filter="url(#bl2)">
<path d="M-1 41C0 35 2.500 30 7 27C10 25 13 24 16 22.500L16.300 18.500L25.500 18.500L25.800 22L30.500 24C32.500 25.500 33.200 31 33 41Z" fill="#bd3f3e"/>
<path d="M16.200 20L25.600 20L25.700 24C22.500 25.500 19 25.500 16 24Z" fill="#a93433"/>
<path d="M20 27C24 26.500 29 28 31 33L31.500 41L24 41Z" fill="#c74b48"/>
<ellipse cx="21.600" cy="14.200" rx="5.500" ry="6.600" fill="#efc1a8"/>
<path d="M14.300 14.500C13 8 15.500 1.200 21.500 1.200C27.500 1.200 29.300 6.500 28 14.500L27 15.500C27.300 12.500 27 10.500 26.300 9.500C23.500 10.300 19.500 10 17.300 9.300C16.300 10.500 16 13 16.200 15.500Z" fill="#1b1512"/>
<path d="M19.500 17.200C20.800 18 22.700 18 24 17" stroke="#c9766f" stroke-width="0.900" fill="none"/>
<circle cx="19.300" cy="12.700" r="0.600" fill="#4a3a35"/><circle cx="24" cy="12.700" r="0.600" fill="#4a3a35"/>
</g></svg>
<span class="t" id="tn3" style="left:1600px;top:651px;line-height:24px;font-size:16px;-webkit-text-stroke:0.2px currentColor">Rin</span>
<span class="t md" id="ts3" style="left:1600px;top:677px;line-height:20px;font-size:14px;color:#0b0b0f">yoga</span>
<span class="t" id="tx3" style="left:1600px;top:697.5px;line-height:16px;font-size:12.400px">10 years exp</span>
<svg class="av" style="left:1548px;top:750px;width:40px;height:40px" viewBox="0 0 40 40">
<defs><filter id="bl3" x="-10%" y="-10%" width="120%" height="120%"><feGaussianBlur stdDeviation="1.100"/></filter><filter id="bl4" x="-10%" y="-10%" width="120%" height="120%"><feGaussianBlur stdDeviation="0.550"/></filter></defs>
<rect width="40" height="40" fill="#26343a"/>
<g filter="url(#bl3)">
<rect x="-2" y="-2" width="44" height="6.500" fill="#2d3b41"/>
<rect x="11" y="3" width="14" height="2" fill="#50626a"/>
<rect x="3.900" y="7.500" width="2.800" height="11.500" fill="#8a6a1e"/>
<rect x="-1" y="11" width="2.800" height="16" fill="#4f6f7d"/>
<rect x="1" y="21.500" width="3.400" height="4.200" fill="#1fa8c8"/>
<rect x="7.200" y="8" width="3.600" height="25" fill="#6f818d"/>
<rect x="8.300" y="12" width="1.500" height="6" fill="#39464d"/>
<rect x="12.300" y="8.300" width="3.600" height="15" fill="#8d98a0"/>
<rect x="10.800" y="4.500" width="5.500" height="4" fill="#1a2226"/>
<rect x="17.200" y="6.700" width="6.300" height="12.300" fill="#5b9db2"/>
<rect x="18.500" y="8.500" width="4" height="7" fill="#86c4d4"/>
<rect x="17" y="19" width="4" height="9" fill="#1d272b"/>
<rect x="30.500" y="6.500" width="3" height="22" fill="#6f949f"/>
<rect x="34" y="7" width="2.300" height="24" fill="#86a7b2"/>
<rect x="34.400" y="12.200" width="2.400" height="2.400" fill="#d2e2e8"/>
<rect x="37" y="10" width="3.500" height="16" fill="#34505b"/>
<rect x="-2" y="31" width="21" height="11" fill="#1e2528"/>
<rect x="8.300" y="32.800" width="8.500" height="3.200" fill="#4a3330"/>
</g><g filter="url(#bl4)"><rect x="25.600" y="13.500" width="4.200" height="6.500" fill="#b3744e"/>
<ellipse cx="27.800" cy="9" rx="2.900" ry="4.500" fill="#c48a64"/>
<path d="M25.300 8.600C25.300 9.500 25.800 12.500 27 13.300C26 11.500 26.200 9.500 26.500 7Z" fill="#dcaa86"/>
<path d="M24.800 7.800C24.600 4.300 26.200 2.800 28.200 2.800C30.300 2.800 31.200 4.600 30.800 8C30.200 6 29.200 5.200 27.800 5.200C26.400 5.200 25.400 6.200 24.800 7.800Z" fill="#4a392a"/>
<path d="M20.800 21C21.500 19.300 23.500 18.600 25.800 18.200C26.500 19.600 29 19.600 29.800 18C31.800 18.500 32.800 19.800 32.800 22L32.300 32.500L30 38L22.500 38L22 27Z" fill="#56687f"/>
<path d="M24 20L27 25L30 20" fill="none" stroke="#475870" stroke-width="0.600"/>
<path d="M18.700 28C19 26.300 20.500 25.600 22 26.200L27 28.200L29.800 26.300C31.500 26.300 32 28.500 31.700 31C31.300 34.500 29.500 36.800 26.500 37L21.500 36.800C19.300 36.300 18.400 32.500 18.700 28Z" fill="#bd7a50"/>
<path d="M20 30C23 31.500 27 31.800 31 30" fill="none" stroke="#8f5636" stroke-width="0.700"/>
<path d="M20.500 33.500C23 34.500 26 34.500 29.500 33.800" fill="none" stroke="#d39a6e" stroke-width="0.800"/>
<path d="M22 37L28 37L27.500 41L22.500 41Z" fill="#8298b3"/>
</g></svg>
<span class="t" id="tn4" style="left:1600px;top:739px;line-height:24px;font-size:16px;-webkit-text-stroke:0.2px currentColor">Ray</span>
<span class="t md" id="ts4" style="left:1600px;top:765px;line-height:20px;font-size:14px;color:#0b0b0f">weight-training</span>
<span class="t" id="tx4" style="left:1600px;top:785.5px;line-height:16px;font-size:12.400px">10 years exp</span>

<!-- ================= TRAINER ATTENDANCE PANEL ================= -->
<section class="panel" style="left:336px;top:846px;width:1560px;height:300px"></section>
<h2 class="t sb" id="ta" style="left:360.500px;top:880px;line-height:28px;font-size:18px">Trainer Attendance Overview</h2>
<a class="btn" style="left:1647px;top:870px;width:225px;height:48px">
  <svg class="abs" style="left:24px;top:16px;width:16px;height:16px;fill:none;stroke:currentColor;stroke-width:1.500" viewBox="0 0 24 24"><path stroke-linecap="round" d="M22 22H2"/><path d="M21 22v-7.500a1.500 1.500 0 0 0-1.500-1.500h-3a1.500 1.500 0 0 0-1.500 1.500V22"/><path d="M15 22V5c0-1.414 0-2.121-.44-2.560C14.122 2 13.415 2 12 2s-2.121 0-2.560.44C9 2.878 9 3.585 9 5v17"/><path d="M9 22V9.500A1.500 1.500 0 0 0 7.500 8h-3A1.500 1.500 0 0 0 3 9.500V22"/></svg>
  <span class="t" id="vfd" style="left:48.500px;top:12.500px;line-height:24px;font-size:16px">View Full Dashboard</span>
</a>
<div class="tbl" style="left:360px;top:934px;width:1512px;height:200px;border-radius:7px 7px 0 0">
  <div class="thead" style="height:48px">
    <span class="th" id="ah1" style="left:16.500px;line-height:48px">Trainer</span>
    <span class="th" id="ah2" style="left:517px;line-height:48px;transform:translateX(-50%)">Today's Sessions</span>
    <span class="th" id="ah3" style="left:762.750px;line-height:48px;transform:translateX(-50%)">Completed</span>
    <span class="th" id="ah4" style="left:967.250px;line-height:48px;transform:translateX(-50%)">In Progress</span>
    <span class="th" id="ah5" style="left:1209.400px;line-height:48px;transform:translateX(-50%)">Attendance Rate</span>
    <span class="th" id="ah6" style="left:1428.700px;line-height:48px;transform:translateX(-50%)">Status</span>
  </div>
  <div class="abs" style="left:0;right:0;top:48px;height:69px;border-bottom:1px solid #e5e7eb">
    <svg class="av" style="left:17px;top:19px;width:30px;height:30px" viewBox="0 0 38 38"><circle cx="19" cy="19" r="18.500" fill="#e5e7eb"/><circle cx="19" cy="19" r="17.700" fill="none" stroke="#1c3962" stroke-width="2.600"/><circle cx="19" cy="12.500" r="7.600" fill="#1c3962"/><path d="M5.100 28.400A18.450 18.450 0 0 1 32.900 28.400L32.900 38L5.100 38Z" fill="#1c3962"/></svg>
    <span class="t" id="an0" style="left:56.400px;top:12px;line-height:20px;font-size:14px;-webkit-text-stroke:0.2px currentColor">Ray</span>
    <span class="t" id="ae0" style="left:56.400px;top:38px;line-height:16px;font-size:12.500px">ray@mailinator.com</span>
    <span class="t md" style="left:517px;top:25px;line-height:20px;font-size:14px;transform:translateX(-50%);color:#0b0b0f">0</span>
    <span class="t md" style="left:762.500px;top:25px;line-height:20px;font-size:14px;transform:translateX(-50%);color:#16a34a">0</span>
    <span class="t md" style="left:967.250px;top:25px;line-height:20px;font-size:14px;transform:translateX(-50%);color:#f59e2a">0</span>
    <span class="t md" id="ap0" style="left:1209px;top:25px;line-height:20px;font-size:14px;transform:translateX(-50%);color:#dc2626">0%</span>
    <span class="pill sb" style="left:1399px;top:24px;width:60px;height:23px;line-height:24.500px;font-size:12px"><span id="ab0">Active</span></span>
  </div>
  <div class="abs" style="left:0;right:0;top:117px;height:69px;border-bottom:1px solid #e5e7eb">
    <svg class="av" style="left:17px;top:19px;width:30px;height:30px" viewBox="0 0 38 38"><circle cx="19" cy="19" r="18.500" fill="#e5e7eb"/><circle cx="19" cy="19" r="17.700" fill="none" stroke="#1c3962" stroke-width="2.600"/><circle cx="19" cy="12.500" r="7.600" fill="#1c3962"/><path d="M5.100 28.400A18.450 18.450 0 0 1 32.900 28.400L32.900 38L5.100 38Z" fill="#1c3962"/></svg>
    <span class="t" id="an1" style="left:56.400px;top:12px;line-height:20px;font-size:14px;-webkit-text-stroke:0.2px currentColor">Rin</span>
    <span class="t" id="ae1" style="left:56.400px;top:38px;line-height:16px;font-size:12.500px">rin@mailinator.com</span>
    <span class="t md" style="left:517px;top:25px;line-height:20px;font-size:14px;transform:translateX(-50%);color:#0b0b0f">0</span>
    <span class="t md" style="left:762.500px;top:25px;line-height:20px;font-size:14px;transform:translateX(-50%);color:#16a34a">0</span>
    <span class="t md" style="left:967.250px;top:25px;line-height:20px;font-size:14px;transform:translateX(-50%);color:#f59e2a">0</span>
    <span class="t md" id="ap1" style="left:1209px;top:25px;line-height:20px;font-size:14px;transform:translateX(-50%);color:#dc2626">0%</span>
    <span class="pill sb" style="left:1399px;top:24px;width:60px;height:23px;line-height:24.500px;font-size:12px"><span id="ab1">Active</span></span>
  </div>
</div>


</body>
</html>
